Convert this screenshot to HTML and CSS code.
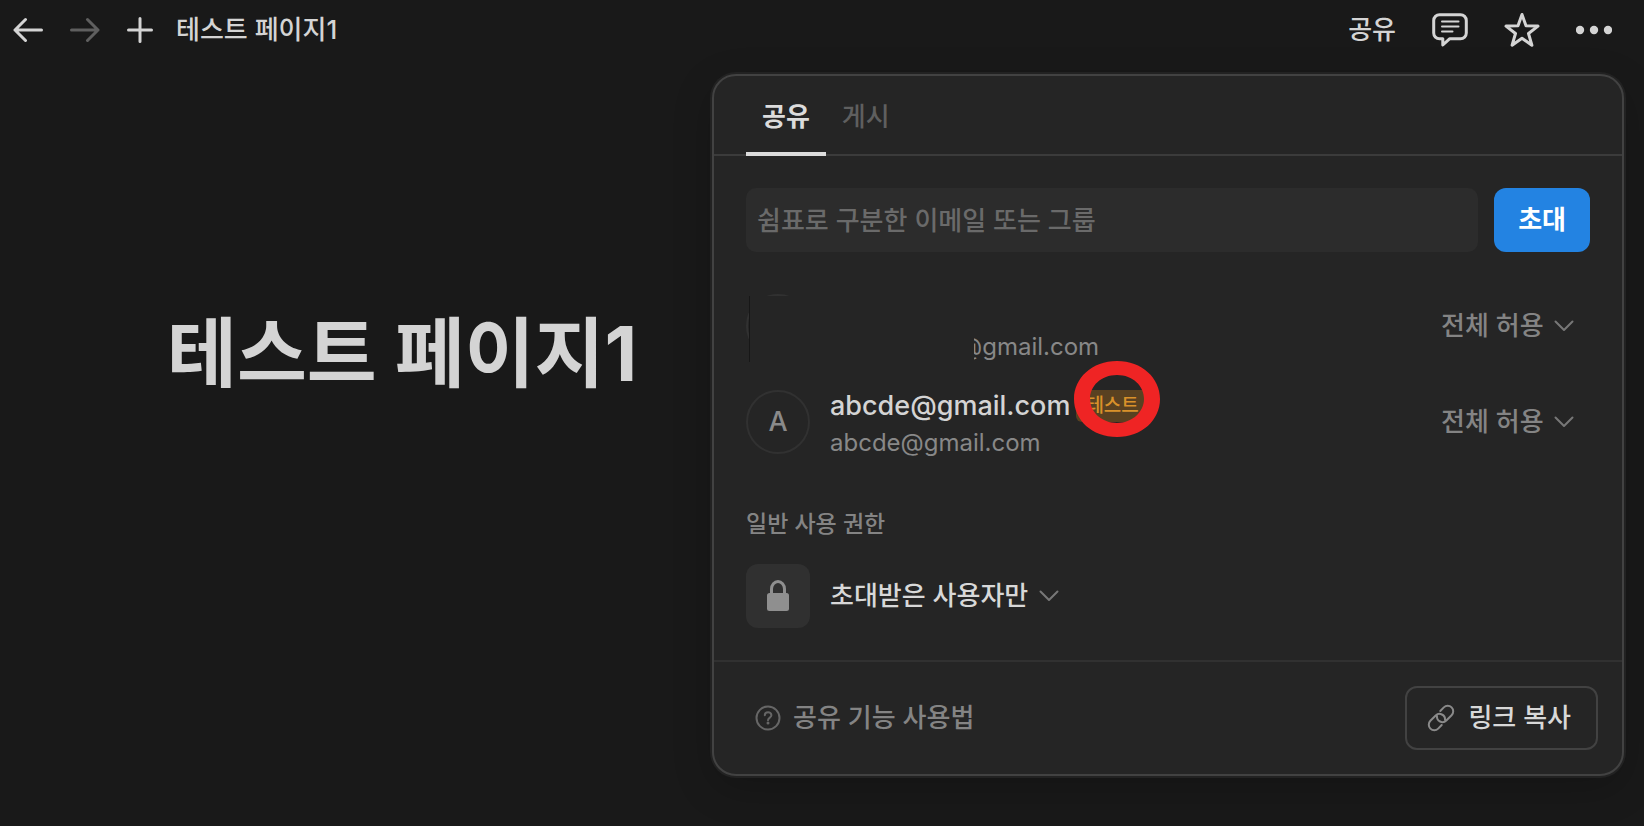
FILE: index.html
```html
<!DOCTYPE html>
<html lang="ko">
<head>
  <meta charset="UTF-8">
  <meta name="viewport" content="width=device-width, initial-scale=1.0">
  <title>테스트 페이지1</title>
  <link rel="stylesheet" href="styles.css">
</head>
<body>

  <!-- Top bar -->
  <header class="topbar">
    <nav class="topbar-nav">
      <button class="icon-button" type="button" aria-label="뒤로">
        <svg width="30" height="26" viewBox="0 0 30 26"><path d="M28.500 13H2M12.500 2.500L2 13l10.500 10.500"/></svg>
      </button>
      <button class="icon-button faded" type="button" aria-label="앞으로">
        <svg width="30" height="26" viewBox="0 0 30 26"><path d="M1.500 13H28M17.500 2.500L28 13L17.500 23.500"/></svg>
      </button>
      <button class="icon-button" type="button" aria-label="새 페이지">
        <svg width="26" height="26" viewBox="0 0 26 26"><path d="M13 1.500v23M1.500 13h23"/></svg>
      </button>
      <a class="breadcrumb" href="#">테스트 페이지1</a>
    </nav>
    <div class="topbar-actions">
      <button class="text-button" type="button">공유</button>
      <button class="icon-button" type="button" aria-label="댓글">
        <svg class="comment" width="36" height="34" viewBox="0 0 36 34">
          <path d="M7.500 1.700h21a5.800 5.800 0 0 1 5.800 5.800v12.500a5.800 5.800 0 0 1-5.800 5.800H17.500L10.800 32V25.800H7.500A5.800 5.800 0 0 1 1.700 20V7.500A5.800 5.800 0 0 1 7.500 1.700z"/>
          <path class="thin" d="M10 8.500h16.500M10 13.500h16.500M10 18.500h10.500"/>
        </svg>
      </button>
      <button class="icon-button" type="button" aria-label="즐겨찾기">
        <svg width="36" height="36" viewBox="0 0 36 36"><path d="M18 2.500l4 11.300 12 .300-9.500 7.400 3.400 11.700L18 26.300 8.100 33.200l3.400-11.700L2 14.100l12-.300z"/></svg>
      </button>
      <button class="icon-button" type="button" aria-label="더 보기">
        <svg class="dots" width="36" height="10" viewBox="0 0 36 10"><circle cx="4" cy="5" r="4.200"/><circle cx="18" cy="5" r="4.200"/><circle cx="32" cy="5" r="4.200"/></svg>
      </button>
    </div>
  </header>

  <main class="page">
    <h1>테스트 페이지1</h1>
  </main>

  <!-- Share popover -->
  <section class="share" aria-label="공유">
    <div class="tabs">
      <button class="tab active" type="button">공유</button>
      <button class="tab" type="button">게시</button>
    </div>

    <div class="share-body">
      <form class="invite">
        <input type="text" placeholder="쉼표로 구분한 이메일 또는 그룹" aria-label="이메일 또는 그룹">
        <button type="button">초대</button>
      </form>

      <ul class="members">
        <li class="member">
          <span class="avatar"></span>
          <div class="member-info">
            <span class="member-mail hidden-name">@gmail.com</span>
          </div>
          <label class="dropdown">
            <select aria-label="권한"><option>전체 허용</option></select>
            <svg class="chevron" width="20" height="12" viewBox="0 0 20 12"><path d="M1.500 1.500L10 10l8.500-8.500"/></svg>
          </label>
          <span class="mask"></span>
        </li>
        <li class="member">
          <span class="avatar">A</span>
          <div class="member-info">
            <div class="member-name">
              abcde@gmail.com
              <span class="badge">테스트
                <svg class="marker" width="86" height="76" viewBox="0 0 86 76"><path fill-rule="evenodd" d="M43 0C68 0 86 17 86 38S68 76 43 76 0 59 0 38 18 0 43 0zM43 14C27 14 16 25 16 38S28 62 43 62 70 51 70 38 59 14 43 14z"/></svg>
              </span>
            </div>
            <span class="member-mail">abcde@gmail.com</span>
          </div>
          <label class="dropdown">
            <select aria-label="권한"><option>전체 허용</option></select>
            <svg class="chevron" width="20" height="12" viewBox="0 0 20 12"><path d="M1.500 1.500L10 10l8.500-8.500"/></svg>
          </label>
        </li>
      </ul>

      <h2>일반 사용 권한</h2>
      <div class="access">
        <span class="lock">
          <svg width="22" height="32" viewBox="0 0 22 32">
            <path class="shackle" d="M4.500 14V9a6.500 7.500 0 0 1 13 0v5"/>
            <rect x="0" y="13" width="22" height="18" rx="2.500"/>
          </svg>
        </span>
        <label class="dropdown bright">
          <select aria-label="일반 사용 권한"><option>초대받은 사용자만</option></select>
          <svg class="chevron" width="20" height="12" viewBox="0 0 20 12"><path d="M1.500 1.500L10 10l8.500-8.500"/></svg>
        </label>
      </div>
    </div>

    <footer class="share-footer">
      <a class="help" href="#">
        <svg width="26" height="26" viewBox="0 0 26 26">
          <circle cx="13" cy="13" r="11.500"/>
          <path d="M9.800 10.300c0-4 6.600-4 6.600 0 0 2.300-3.400 2.300-3.400 5"/>
          <circle class="dot" cx="13" cy="18" r="1.500"/>
        </svg>
        공유 기능 사용법
      </a>
      <button class="copy" type="button">
        <svg width="28" height="28" viewBox="-14 -14 28 28">
          <g transform="rotate(-45)">
            <path d="M-4.500 5.500H-9.500a5.500 5.500 0 0 1 0-11H-2a5.500 5.500 0 0 1 3.500 9.700"/>
            <path d="M4.500-5.500H9.500a5.500 5.500 0 0 1 0 11H2a5.500 5.500 0 0 1-3.500-9.700"/>
          </g>
        </svg>
        링크 복사
      </button>
    </footer>
  </section>

</body>
</html>
```

FILE: styles.css
```css
* {
  box-sizing: border-box;
  margin: 0;
  padding: 0;
}

body {
  font-family: Inter, "Noto Sans CJK KR", sans-serif;
  font-size: 26px;
  line-height: 36px;
  background: #191919;
  color: #d4d4d4;
  min-height: 100vh;
  position: relative;
}

button, input, select {
  font: inherit;
  color: inherit;
  background: none;
  border: none;
  outline: none;
}

a {
  color: inherit;
  text-decoration: none;
}

svg {
  display: block;
  flex-shrink: 0;
  fill: none;
  stroke: currentColor;
  stroke-width: 3;
  stroke-linecap: round;
  stroke-linejoin: round;
}

/* Top bar */
.topbar {
  display: flex;
  justify-content: space-between;
  align-items: center;
  height: 60px;
  padding: 0 32px 0 13px;
}

.topbar-nav {
  display: flex;
  align-items: center;
  gap: 27px;
}

.breadcrumb {
  margin-left: -4px;
  font-weight: 500;
}

.faded {
  color: #5f5f5f;
}

.topbar-actions {
  display: flex;
  align-items: center;
  gap: 36px;
}

.text-button {
  font-weight: 500;
}

.comment .thin {
  stroke-width: 2;
}

.dots {
  fill: currentColor;
  stroke: none;
}

.page {
  padding: 237px 167px 0;
}

h1 {
  font-size: 76px;
  font-weight: 700;
  line-height: 112px;
}

/* Share popover */
.share {
  position: absolute;
  top: 74px;
  right: 20px;
  width: 912px;
  background: #252525;
  border: 2px solid #424242;
  border-radius: 24px;
  box-shadow: 0 0 0 2px #222, 0 12px 40px rgba(0, 0, 0, 0.2);
}

.tabs {
  display: flex;
  height: 80px;
  padding: 0 32px;
  border-bottom: 2px solid #3b3b3b;
}

.tab {
  height: 80px;
  padding: 2px 16px 0;
  color: #5f5f5f;
  font-weight: 500;
}

.tab.active {
  color: #dcdcdc;
  font-weight: 700;
  padding-top: 6px;
  border-bottom: 4px solid #dcdcdc;
}

.share-body {
  padding: 32px;
}

.invite {
  display: flex;
  gap: 16px;
}

.invite input {
  flex: 1;
  min-width: 0;
  height: 64px;
  padding: 0 11px;
  background: #2c2c2c;
  border-radius: 10px;
  font-weight: 500;
}

.invite input::placeholder {
  color: #6a6a6a;
}

.invite button {
  height: 64px;
  padding: 0 24px;
  border-radius: 12px;
  background: #2383e2;
  color: #fff;
  font-weight: 700;
}

.members {
  list-style: none;
  margin: 42px 0;
  display: grid;
  gap: 32px;
}

.member {
  position: relative;
  display: flex;
  align-items: center;
  gap: 20px;
  height: 64px;
}

.avatar {
  display: flex;
  align-items: center;
  justify-content: center;
  width: 64px;
  height: 64px;
  border: 2px solid #313131;
  border-radius: 50%;
  color: #8a8a8a;
  font-size: 27px;
  font-weight: 500;
}

.member-info {
  flex: 1;
  display: flex;
  flex-direction: column;
  justify-content: flex-end;
  gap: 10px;
  height: 64px;
}

.member-name {
  display: flex;
  align-items: center;
  gap: 6px;
  font-size: 27px;
  font-weight: 500;
  line-height: 32px;
}

.member-mail {
  color: #888;
  font-size: 24px;
  line-height: 22px;
}

.hidden-name {
  padding-left: 129px;
}

/* covers the first member's name and avatar */
.mask {
  position: absolute;
  top: 2px;
  left: 3px;
  width: 225px;
  height: 66px;
  background: #252525;
  border-left: 1px solid #171717;
}

.badge {
  position: relative;
  padding: 0 10px;
  border-radius: 6px;
  background: #594121;
  color: #d9912a;
  font-size: 19px;
  font-weight: 500;
}

.marker {
  position: absolute;
  top: -29px;
  left: -2px;
  fill: #ef2424;
  stroke: none;
}

.dropdown {
  display: flex;
  align-items: center;
  gap: 10px;
  padding-right: 16px;
  color: #848484;
  font-weight: 500;
}

.dropdown.bright {
  color: #d8d8d8;
}

.dropdown select {
  appearance: none;
}

.chevron {
  stroke-width: 2;
  color: #777;
}

h2 {
  font-size: 23px;
  font-weight: 500;
  line-height: 32px;
  color: #848484;
  margin: 54px 0 24px;
}

.access {
  display: flex;
  align-items: center;
  gap: 20px;
}

.lock {
  display: flex;
  align-items: center;
  justify-content: center;
  width: 64px;
  height: 64px;
  border-radius: 12px;
  background: #303030;
  color: #8f8f8f;
}

.lock rect {
  fill: currentColor;
  stroke: none;
}

.share-footer {
  display: flex;
  justify-content: space-between;
  align-items: center;
  padding: 24px;
  border-top: 2px solid #313131;
}

.help {
  display: flex;
  align-items: center;
  gap: 12px;
  padding-left: 17px;
  color: #848484;
  font-weight: 500;
}

.help svg {
  stroke-width: 2;
  color: #666;
}

.help .dot {
  fill: currentColor;
  stroke: none;
}

.copy {
  display: flex;
  align-items: center;
  gap: 13px;
  height: 64px;
  padding: 0 25px 0 20px;
  border: 2px solid #424242;
  border-radius: 12px;
  color: #d8d8d8;
  font-weight: 500;
}

.copy svg {
  stroke-width: 2;
  color: #8a8a8a;
}
```
